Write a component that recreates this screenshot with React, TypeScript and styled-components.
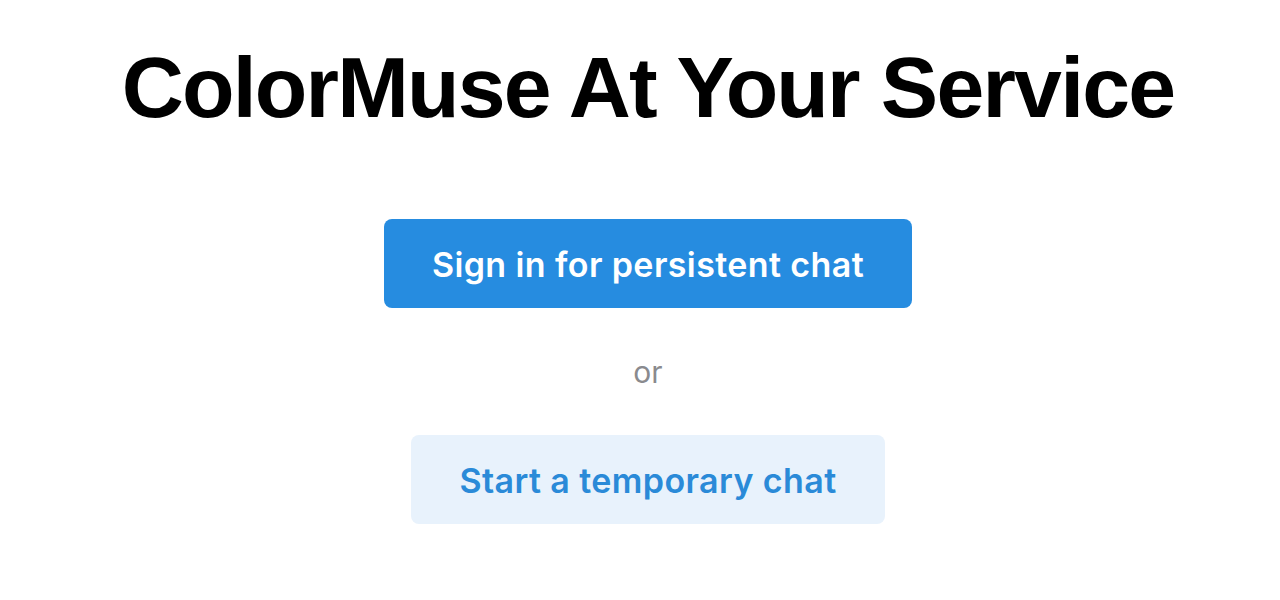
import styled, { createGlobalStyle } from 'styled-components';

const GlobalStyle = createGlobalStyle`
  html, body {
    margin: 0;
    padding: 0;
    background: #ffffff;
  }
  body {
    font-family: Inter, "Noto Sans", sans-serif;
  }
`;

const Page = styled.main`
  width: 100vw;
  height: 100vh;
  display: flex;
  flex-direction: column;
  align-items: center;
  padding: 39px 0 0 16px;
  box-sizing: border-box;
`;

const Title = styled.h1`
  margin: 0;
  font-family: "Liberation Sans", Arial, sans-serif;
  font-weight: 700;
  font-size: 86px;
  line-height: 96px;
  color: #000000;
  letter-spacing: -1.8px;
`;

const Actions = styled.div`
  margin-top: 84px;
  display: flex;
  flex-direction: column;
  align-items: center;
`;

const Button = styled.button<{ $variant: 'primary' | 'secondary' }>`
  border: none;
  border-radius: 8px;
  height: 89px;
  padding: 2px 48px 0;
  font-family: Inter, "Noto Sans", sans-serif;
  font-weight: 600;
  font-size: 34px;
  letter-spacing: 0.4px;
  cursor: pointer;
  background: ${p => (p.$variant === 'primary' ? '#268ce0' : '#e8f2fc')};
  color: ${p => (p.$variant === 'primary' ? '#ffffff' : '#2a8ad8')};
`;

const Divider = styled.span`
  font-family: Inter, "Noto Sans", sans-serif;
  font-size: 30px;
  color: #8a8a8e;
  line-height: 36px;
  margin: 46px 0 45px;
`;

const App = () => {
  return (
    <>
      <GlobalStyle />
      <Page>
        <Title>ColorMuse At Your Service</Title>
        <Actions>
          <Button $variant="primary">Sign in for persistent chat</Button>
          <Divider>or</Divider>
          <Button $variant="secondary">Start a temporary chat</Button>
        </Actions>
      </Page>
    </>
  );
};

export default App;
